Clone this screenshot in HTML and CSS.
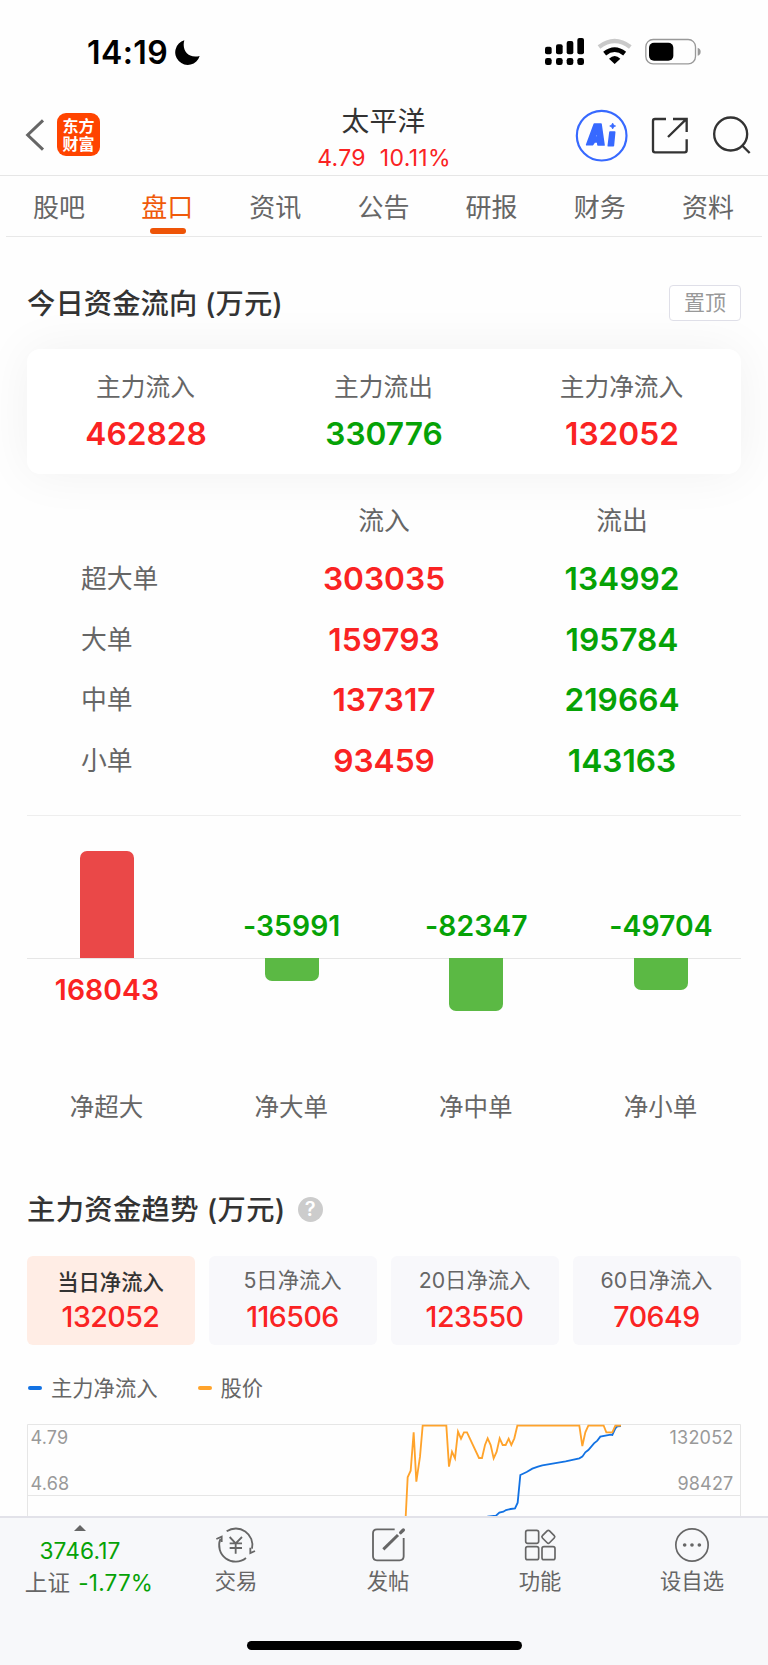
FILE: index.html
```html
<!DOCTYPE html>
<html lang="zh-CN">
<head>
<meta charset="utf-8">
<title>太平洋</title>
<link rel="stylesheet" href="styles.css">
</head>
<body>
<div class="phone">
  <div class="status">
    <span class="clock">14:19</span>
    <svg class="moon" viewBox="522 117 81 81"><path d="M553 121C545 148 562 177 599 168A37.500 37.500 0 1 1 553 121Z"/></svg>
    <svg class="indicators" viewBox="480 108 480 93">
      <rect x="483" y="140" width="20" height="23" rx="6"/><rect x="516" y="133" width="20" height="30" rx="6"/><rect x="548" y="123" width="20" height="40" rx="6"/><rect x="580" y="114" width="20" height="49" rx="6"/>
      <rect x="483" y="174" width="20" height="21" rx="7"/><rect x="516" y="174" width="20" height="21" rx="7"/><rect x="548" y="174" width="20" height="21" rx="7"/><rect x="580" y="174" width="20" height="21" rx="7"/>
      <path d="M645 141Q692 105 739 141" fill="none" stroke="#c9c9c9" stroke-width="13"/>
      <path d="M662 161Q692 137 722 161" fill="none" stroke="#000" stroke-width="14"/>
      <path d="M675 176Q692 160 709 176L692 192Z"/>
      <rect x="785.500" y="118.500" width="149" height="73" rx="22" fill="none" stroke="#999" stroke-width="4"/>
      <rect x="795" y="128" width="73" height="54" rx="15"/>
      <path d="M941 143Q950 146 950 155T941 167Z" fill="#999"/>
    </svg>
  </div>
  <header class="header">
    <div class="nav-left">
      <svg class="back" viewBox="75 355 60 102"><path d="M129 362L83 406L129 450" fill="none" stroke="#666" stroke-width="9"/></svg>
      <div class="logo"><span>东方</span><span>财富</span></div>
    </div>
    <div class="stock"><div class="stock-name">太平洋</div><div class="stock-price"><span>4.79</span><span>10.11%</span></div></div>
    <svg class="actions" viewBox="570 320 540 171">
      <circle cx="653" cy="406" r="74.500" fill="none" stroke="#3769ff" stroke-width="6.500"/>
      <g fill="#3769ff" stroke="#3769ff" stroke-width="5" stroke-linejoin="round"><path fill-rule="evenodd" d="M631 371H651L660 434H642L641 425H631L626 433H608ZM638 392L633 410H641Z"/><path d="M678 395H692L688 436H673Z"/><path d="M686 368L689 374L695 377L689 380L686 386L683 380L677 377L683 374Z" stroke-width="2"/></g>
      <g fill="none" stroke="#333" stroke-width="7"><path d="M846 356H813Q807 356 807 362V450Q807 456 813 456H902Q908 456 908 450V417"/><path d="M867 356H908V395M906 357L852 410"/><circle cx="1040" cy="401" r="49.500"/><path d="M1073 434L1097 458"/></g>
    </svg>
  </header>
  <nav class="tabs"><span>股吧</span><span class="active">盘口</span><span>资讯</span><span>公告</span><span>研报</span><span>财务</span><span>资料</span></nav>

  <main class="content">
    <div class="section-head"><h2>今日资金流向 (万元)</h2><button class="pin">置顶</button></div>
    <section class="summary">
      <div><span class="label">主力流入</span><b class="red">462828</b></div>
      <div><span class="label">主力流出</span><b class="green">330776</b></div>
      <div><span class="label">主力净流入</span><b class="red">132052</b></div>
    </section>
    <section class="flows">
      <div class="flow-row flow-top"><span></span><span>流入</span><span>流出</span></div>
      <div class="flow-row"><span>超大单</span><b class="red">303035</b><b class="green">134992</b></div>
      <div class="flow-row"><span>大单</span><b class="red">159793</b><b class="green">195784</b></div>
      <div class="flow-row"><span>中单</span><b class="red">137317</b><b class="green">219664</b></div>
      <div class="flow-row"><span>小单</span><b class="red">93459</b><b class="green">143163</b></div>
    </section>
    <section class="bars">
      <div class="bar-col"><div class="up"><i class="bar bar-red" style="height:107px"></i></div><div class="down"><b class="red">168043</b></div><span>净超大</span></div>
      <div class="bar-col"><div class="up"><b class="green">-35991</b></div><div class="down"><i class="bar bar-green" style="height:23px"></i></div><span>净大单</span></div>
      <div class="bar-col"><div class="up"><b class="green">-82347</b></div><div class="down"><i class="bar bar-green" style="height:52.5px"></i></div><span>净中单</span></div>
      <div class="bar-col"><div class="up"><b class="green">-49704</b></div><div class="down"><i class="bar bar-green" style="height:32px"></i></div><span>净小单</span></div>
    </section>
    <div class="section-head trend-head"><h2>主力资金趋势 (万元)</h2><span class="help">?</span></div>
    <section class="periods">
      <div class="period selected"><span>当日净流入</span><b>132052</b></div>
      <div class="period"><span>5日净流入</span><b>116506</b></div>
      <div class="period"><span>20日净流入</span><b>123550</b></div>
      <div class="period"><span>60日净流入</span><b>70649</b></div>
    </section>
    <div class="legend"><span class="key blue">主力净流入</span><span class="key orange">股价</span></div>
    <section class="chart">
      <svg viewBox="0 0 714 93" width="714" height="93">
        <path d="M.5 93V.5H713.500V93M0 71.500H714" fill="none" stroke="#e6e6e6"/>
        <g class="axis"><text x="3.500" y="19.500">4.79</text><text x="3.500" y="66">4.68</text><text class="end" x="706.500" y="19.500">132052</text><text class="end" x="706.500" y="66">98427</text></g>
        <g transform="translate(357 -24) scale(.33333)" fill="none" stroke-width="5.500" stroke-linejoin="miter">
          <polyline stroke="#1272e3" points="310,350 336,347 346,338 358,335 366,330 380,327 393,325 401,308 409,225 428,216 445,206 462,200 475,196 510,190 545,184 586,175 595,170 604,157 613,150 630,130 640,122 649,110 680,104 685,105 694,85 700,79 711,78"/>
          <polyline stroke="#ffa32b" points="65,352 71,232 80,212 89,97 97,245 108,170 116,77 187,77 195,200 204,155 213,175 222,95 231,116 240,97 249,97 285,174 294,174 303,135 311,115 320,135 329,175 338,155 347,115 356,135 365,135 374,116 382,135 391,115 400,77 586,77 595,138 604,97 613,77 659,77 667,97 685,97 694,77 711,77"/>
        </g>
      </svg>
    </section>
  </main>

  <footer class="footer">
    <div class="dock">
      <div class="index"><i class="arrow"></i><span class="index-value">3746.17</span><span class="index-line"><em>上证</em><span>-1.77%</span></span></div>
      <div class="dock-item"><svg viewBox="650 378 120 114"><g fill="none" stroke="#666" stroke-width="5.500"><path d="M682 394A49.500 49.500 0 0 1 758 446M740 474A49.500 49.500 0 0 1 663 417"/><path d="M651 417L667 410V426M767 453L753 459V443"/><path d="M691 411L709 430L728 411M709 430V461M691 430H728M691 444H728"/></g></svg><span>交易</span></div>
      <div class="dock-item"><svg viewBox="1104 378 120 114"><g fill="none" stroke="#666" stroke-width="5.500"><path d="M1184 388H1131Q1119 388 1119 400V469Q1119 481 1131 481H1199Q1211 481 1211 469V414"/><path d="M1150 448L1194 405" stroke-width="9"/><path d="M1202 398L1210 390" stroke-width="10" stroke-linecap="round"/></g></svg><span>发帖</span></div>
      <div class="dock-item"><svg viewBox="408 378 120 114"><g fill="none" stroke="#666" stroke-width="5"><rect x="425" y="391" width="39" height="39" rx="6"/><rect x="425" y="440" width="39" height="39" rx="6"/><rect x="474" y="440" width="39" height="39" rx="6"/><rect x="478" y="395.500" width="30" height="30" rx="5" transform="rotate(45 493 410.500)"/></g></svg><span>功能</span></div>
      <div class="dock-item"><svg viewBox="864 378 120 114"><circle cx="924" cy="435" r="48.500" fill="none" stroke="#666" stroke-width="5"/><g fill="#666"><circle cx="902" cy="435" r="5.500"/><circle cx="924" cy="435" r="5.500"/><circle cx="946" cy="435" r="5.500"/></g></svg><span>设自选</span></div>
    </div>
    <div class="home"></div>
  </footer>
</div>
</body>
</html>
```

FILE: styles.css
```css
* { box-sizing: border-box; }
body { margin: 0; background: #fefefe; }
.phone { width: 768px; height: 1665px; overflow: hidden; display: flex; flex-direction: column; font-family: Inter, "Noto Sans CJK SC", sans-serif; color: #666; }
b { font-weight: 600; }
i, em { font-style: normal; }
.red { color: #fa2323; }
.green { color: #06a206; }

.status { height: 100px; padding: 36px 0 0 87px; display: flex; align-items: flex-start; flex: none; }
.clock { font-size: 32px; line-height: 34px; font-weight: 600; color: #000; width: 87px; letter-spacing: 0.4px; white-space: nowrap; }
.moon { width: 27px; height: 27px; margin-top: 3px; }
.indicators { width: 160px; height: 31px; margin-left: 343px; }

.header { height: 76px; flex: none; border-bottom: 1px solid #e6e6e6; display: grid; grid-template-columns: 1fr 200px 1fr; }
.nav-left { display: flex; padding: 13px 0 0 25px; }
.back { width: 20px; height: 34px; margin-top: 5px; }
.logo { width: 43px; height: 43px; margin-left: 12px; border-radius: 9px; background: #ff4400; color: #fff; font-size: 16px; line-height: 18px; font-weight: 700; display: flex; flex-direction: column; align-items: center; justify-content: center; }
.stock { display: flex; flex-direction: column; align-items: center; padding-top: 4px; }
.stock-name { font-size: 27.7px; line-height: 34px; color: #333; letter-spacing: .3px; margin-left: -1px; }
.stock-price { font-size: 23px; line-height: 30px; margin-top: 5px; display: flex; gap: 14px; color: #fa2323; letter-spacing: .3px; }
.actions { width: 180px; height: 57px; margin: 7px 0 0 90px; }

.tabs { height: 61px; flex: none; margin: 0 6px; border-bottom: 1px solid #e8e8e8; display: flex; justify-content: space-between; padding: 14px 0 0; }
.tabs span { width: 108px; height: 46px; font-size: 26px; line-height: 36px; text-align: center; }
.tabs span:first-child { margin-left: -1px; }
.tabs .active { color: #f05a0a; display: flex; flex-direction: column; align-items: center; }
.active::after { content: ""; width: 36px; height: 6px; margin-top: 2px; margin-left: 1px; border-radius: 3px; background: #ee5407; flex: none; }

.content { flex: 1; min-height: 0; overflow: hidden; padding: 48px 27px 0; }
.section-head { height: 36px; display: flex; justify-content: space-between; align-items: center; }
h2 { margin: 2px 0 0; font-size: 28.3px; line-height: 36px; font-weight: 500; color: #333; white-space: nowrap; letter-spacing: .1px; }
.pin { width: 72px; height: 36px; padding: 0; border: 1px solid #dfdfe8; border-radius: 4px; background: #fff; color: #999; font: 21px/34px Inter, "Noto Sans CJK SC", sans-serif; }
.summary { height: 125px; margin-top: 28px; border-radius: 13px; background: #fff; box-shadow: 0 0 50px rgba(0,0,0,.055); display: grid; grid-template-columns: repeat(3, 1fr); padding-top: 20px; }
.summary div { display: flex; flex-direction: column; align-items: center; }
.label { font-size: 24.7px; line-height: 37px; margin-left: -1px; }
.summary b { font-size: 31.700px; line-height: 36px; margin-top: 10px; }
.flows { height: 342px; padding-top: 17px; border-bottom: 1px solid #eee; }
.flow-row { height: 60.7px; line-height: 61px; font-size: 25.8px; display: grid; grid-template-columns: repeat(3, 1fr); text-align: center; }
.flow-row b { font-size: 31.700px; }
.flow-row > span:first-child { text-align: left; padding-left: 54px; }
.flow-top { height: 57px; line-height: 60px; }
.bars { height: 309px; display: flex; justify-content: space-between; background: linear-gradient(#e6e6e6, #e6e6e6) 0 142px / 100% 1px no-repeat; }
.bar-col { width: 160px; display: flex; flex-direction: column; align-items: center; }
.up { height: 142px; display: flex; align-items: flex-end; }
.up b { margin-bottom: 14px; }
.down { height: 132px; display: flex; align-items: flex-start; }
.down b { margin-top: 14px; }
.up b, .down b { font-size: 28.300px; line-height: 36px; letter-spacing: .1px; }
.bar { width: 54px; }
.bar-red { background: #ea4848; border-radius: 7px 7px 0 0; }
.bar-green { background: #5bb944; border-radius: 0 0 7px 7px; }
.bar-col > span { font-size: 24.5px; line-height: 34px; margin-left: -1px; }
.trend-head { margin-top: 66px; justify-content: flex-start; gap: 12px; }
.trend-head h2 { letter-spacing: .35px; }
.help { width: 25px; height: 25px; border-radius: 50%; background: #ccc; color: #fff; font-size: 20px; font-weight: 600; line-height: 25px; text-align: center; }
.periods { display: flex; gap: 14px; margin-top: 28.500px; }
.period { flex: 1; height: 89px; border-radius: 6px; background: #f8f8fb; display: flex; flex-direction: column; align-items: center; padding-top: 9px; }
.period span { font-size: 21.3px; line-height: 30px; margin-left: -1px; }
.period b { font-size: 28.5px; line-height: 34px; margin-top: 5px; font-weight: 500; color: #fa2323; letter-spacing: -.5px; margin-left: -1px; }
.selected { background: #ffede5; }
.selected span { color: #333; font-weight: 500; margin-top: 2px; margin-bottom: -2px; }
.legend { height: 30px; margin-top: 28px; display: flex; gap: 40px; font-size: 21.3px; line-height: 30px; padding-left: 1px; }
.key { display: flex; align-items: center; gap: 9px; }
.key::before { content: ""; width: 14px; height: 4px; border-radius: 2px; background: #1272e3; }
.orange::before { background: #ffa32b; }
.chart { margin-top: 21px; }
.chart svg { display: block; }
.axis { font-size: 18px; fill: #999; letter-spacing: .2px; }
.end { text-anchor: end; }

.footer { height: 149px; flex: none; border-top: 2px solid #e2e2e9; background: #f7f8fa; }
.dock { height: 123px; display: grid; grid-template-columns: 160px repeat(4, 152px); }
.index { display: flex; flex-direction: column; align-items: center; padding-top: 7px; white-space: nowrap; }
.arrow { border: 6px solid transparent; border-top: 0; border-bottom-color: #666; }
.index-value { margin-top: 5px; font-size: 22.7px; line-height: 30px; color: #06a206; letter-spacing: .15px; }
.index-line { display: flex; gap: 8px; font-size: 22.500px; line-height: 32px; margin-top: 1px; color: #06a206; padding-left: 18px; letter-spacing: .2px; }
.index-line em { color: #666; }
.dock-item { display: flex; flex-direction: column; align-items: center; padding-top: 8px; font-size: 21.3px; line-height: 32px; }
.dock-item svg { width: 40px; height: 38px; margin-bottom: 1px; }
.home { width: 275px; height: 9px; border-radius: 5px; background: #000; margin: 0 auto; }
```
